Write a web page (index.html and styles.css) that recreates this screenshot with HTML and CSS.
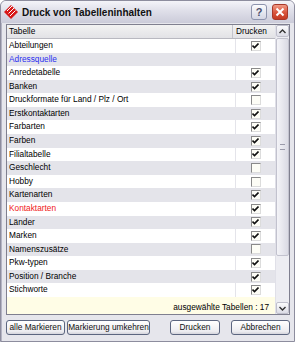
FILE: index.html
```html
<!DOCTYPE html>
<html lang="de">
<head>
  <meta charset="UTF-8">
  <title>Druck von Tabelleninhalten</title>
  <link rel="stylesheet" href="styles.css">
</head>
<body>

<div class="window">
  <div class="titlebar">
    <svg class="app-icon" width="14" height="14" viewBox="0 0 14 14">
      <polygon points="7,0 14,7 7,14 0,7" fill="#d81818"/>
      <line x1="3" y1="6" x2="8" y2="1" stroke="#fff" stroke-width="1"/>
      <line x1="4.5" y1="8.5" x2="10" y2="3" stroke="#fff" stroke-width="1"/>
      <line x1="6" y1="11" x2="11.5" y2="5.5" stroke="#fff" stroke-width="1"/>
    </svg>
    <span class="title">Druck von Tabelleninhalten</span>
    <span class="tb-btn help">?</span>
    <span class="tb-btn close">
      <svg width="10" height="10" viewBox="0 0 10 10">
        <path d="M1.5 1.5 L8.5 8.5 M8.5 1.5 L1.5 8.5" stroke="#fff" stroke-width="2"/>
      </svg>
    </span>
  </div>

  <div class="client">
    <div class="list">
      <div class="list-main">
        <div class="list-head">
          <div class="col-name">Tabelle</div>
          <div class="col-print">Drucken</div>
        </div>
        <div class="rows" id="rows"></div>
        <div class="status">ausgewählte Tabellen : 17</div>
      </div>
      <div class="scrollbar">
        <div class="sb-btn">
          <svg width="7" height="5" viewBox="0 0 7 5"><path d="M0.5 4 L3.5 1 L6.5 4" fill="none" stroke="#333" stroke-width="1.4"/></svg>
        </div>
        <div class="sb-track">
          <div class="sb-thumb"><span class="grip"></span></div>
        </div>
        <div class="sb-btn">
          <svg width="7" height="5" viewBox="0 0 7 5"><path d="M0.5 1 L3.5 4 L6.5 1" fill="none" stroke="#333" stroke-width="1.4"/></svg>
        </div>
      </div>
    </div>

    <div class="buttons">
      <button class="btn btn-mark">alle Markieren</button>
      <button class="btn btn-invert">Markierung umkehren</button>
      <span class="spacer"></span>
      <button class="btn btn-print">Drucken</button>
      <button class="btn btn-cancel">Abbrechen</button>
    </div>
  </div>
</div>

<script>
// name, Zustand (1 = markiert, 0 = leer, null = kein Kästchen), Farbe
const tables = [
  ["Abteilungen", 1],
  ["Adressquelle", null, "blue"],
  ["Anredetabelle", 1],
  ["Banken", 1],
  ["Druckformate für Land / Plz / Ort", 0],
  ["Erstkontaktarten", 1],
  ["Farbarten", 1],
  ["Farben", 1],
  ["Filialtabelle", 1],
  ["Geschlecht", 0],
  ["Hobby", 0],
  ["Kartenarten", 1],
  ["Kontaktarten", 1, "red"],
  ["Länder", 1],
  ["Marken", 1],
  ["Namenszusätze", 0],
  ["Pkw-typen", 1],
  ["Position / Branche", 1],
  ["Stichworte", 1]
];

const rows = document.getElementById("rows");
tables.forEach((t, i) => {
  const row = document.createElement("div");
  row.className = "row" + (i % 2 ? " odd" : "");
  const name = document.createElement("div");
  name.className = "col-name";
  if (t[2]) name.classList.add(t[2]);
  name.textContent = t[0];
  const cell = document.createElement("div");
  cell.className = "col-print";
  if (t[1] !== null) {
    const box = document.createElement("span");
    box.className = "check";
    if (t[1]) {
      box.innerHTML = '<svg width="7" height="6" viewBox="0 0 7 6"><path d="M0.5 2.5 L2.5 4.5 L6.5 0.5" fill="none" stroke="#111" stroke-width="1.6"/></svg>';
    }
    cell.appendChild(box);
  }
  row.appendChild(name);
  row.appendChild(cell);
  rows.appendChild(row);
});
</script>

</body>
</html>
```

FILE: styles.css
```css
body {
  margin: 0;
  font-family: "Liberation Sans", Arial, sans-serif;
  font-size: 8.3px;
  color: #000;
  background: #fff;
}

.window {
  width: 295px;
  height: 342px;
  box-sizing: border-box;
  display: flex;
  flex-direction: column;
  background: #c9c9d6;
  border: 1px solid #8d8d9e;
  border-radius: 6px 6px 0 0;
  overflow: hidden;
}

.titlebar {
  height: 22px;
  flex: none;
  display: flex;
  align-items: center;
  padding: 0 6px 0 3px;
  gap: 3px;
  background: linear-gradient(#f4f4f9, #dfdfe9 45%, #cbcbd9 100%);
}

.app-icon {
  flex: none;
  margin-right: 1px;
}

.title {
  flex: 1;
  font-weight: bold;
  font-size: 10px;
  color: #111;
}

.tb-btn {
  width: 16px;
  height: 16px;
  box-sizing: border-box;
  border-radius: 3px;
  display: flex;
  align-items: center;
  justify-content: center;
}

.tb-btn.help {
  border: 1px solid #8d93ad;
  background: linear-gradient(#fbfbfd, #d4d6e4);
  color: #4a4f6c;
  font-weight: bold;
  font-size: 11px;
  margin-right: 2px;
}

.tb-btn.close {
  border: 1px solid #a7382a;
  background: linear-gradient(#f09a86, #d9543c 55%, #c43a22);
}

.client {
  flex: 1;
  display: flex;
  flex-direction: column;
  padding: 1px 4px 3px 4px;
  background: #e6e6ec;
  border-left: 1px solid #b4b4c4;
}

.list {
  height: 291px;
  box-sizing: border-box;
  flex: none;
  display: flex;
  border: 1px solid #7f7f8f;
  background: #fff;
}

.list-main {
  flex: 1;
  display: flex;
  flex-direction: column;
}

.list-head {
  display: flex;
  height: 13px;
  background: linear-gradient(#f2f2f2, #e2e2e6);
  border-bottom: 1px solid #b8b8c0;
  line-height: 13px;
}

.list-head .col-name {
  border-right: 1px solid #c4c4cc;
}

.col-name {
  flex: 1;
  padding-left: 2px;
  white-space: nowrap;
  overflow: hidden;
}

.col-print {
  width: 39px;
  display: flex;
  align-items: center;
  justify-content: center;
}

.list-head .col-print {
  justify-content: flex-start;
  padding-left: 3px;
}

.rows {
  flex: none;
}

.row {
  display: flex;
  height: 13.58px;
  line-height: 13.58px;
  background: #fff;
}

.row.odd {
  background: #e4e4ea;
}

.row .col-print {
  border-left: 1px solid #e4e4ea;
}

.col-name.blue {
  color: #2a2ef0;
}

.col-name.red {
  color: #f02020;
}

.check {
  width: 10px;
  height: 10px;
  box-sizing: border-box;
  border: 1px solid;
  border-color: #8a8a8a #dcdcdc #dcdcdc #8a8a8a;
  background: #fdfdf6;
  display: flex;
  align-items: center;
  justify-content: center;
}

.status {
  flex: 1;
  background: #fffde6;
  text-align: right;
  padding: 4px 6px 0 0;
  line-height: 12px;
}

.scrollbar {
  width: 13px;
  display: flex;
  flex-direction: column;
  background: #ededf2;
  border-left: 1px solid #e0e0e8;
}

.sb-btn {
  height: 12px;
  box-sizing: border-box;
  border: 1px solid #c0c0cc;
  border-radius: 2px;
  background: linear-gradient(#fcfcfd, #dcdce6);
  display: flex;
  align-items: center;
  justify-content: center;
}

.sb-track {
  flex: 1;
  display: flex;
  flex-direction: column;
  padding-bottom: 46px;
}

.sb-thumb {
  flex: 1;
  margin-top: 1px;
  border: 1px solid #c2c2ce;
  border-radius: 2px;
  background: linear-gradient(90deg, #f4f4f8, #dadae4);
  display: flex;
  align-items: center;
  justify-content: center;
}

.grip {
  width: 5px;
  height: 4px;
  border-top: 1px solid #9a9aaa;
  border-bottom: 1px solid #9a9aaa;
}

.buttons {
  display: flex;
  gap: 2px;
  margin-top: 5px;
}

.spacer {
  flex: 1;
}

.btn {
  height: 15px;
  padding: 0;
  font-family: inherit;
  font-size: 8.3px;
  white-space: nowrap;
  color: #111;
  border: 1px solid #5c6680;
  border-radius: 3px;
  background: linear-gradient(#ffffff, #ececf0 80%, #d4d4dc);
  line-height: 13px;
}

.btn-mark { width: 59px; }
.btn-invert { width: 83px; }
.btn-print { width: 50px; margin-right: 9px; }
.btn-cancel { width: 59px; }
```
